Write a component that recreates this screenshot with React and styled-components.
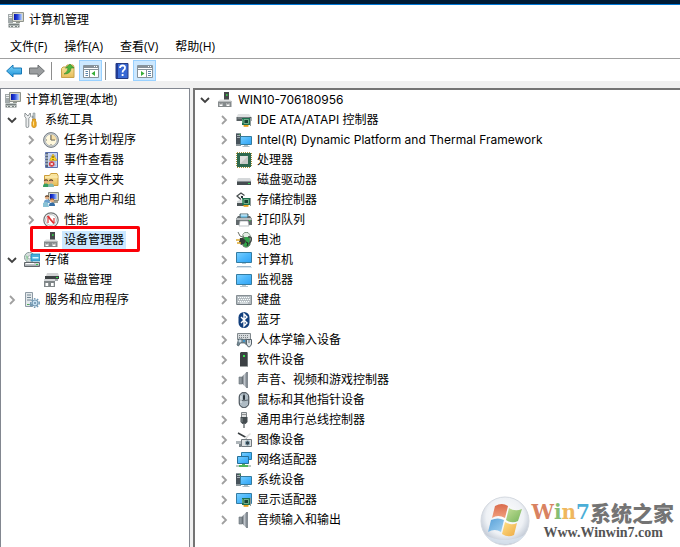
import React from "react";
import styled, { createGlobalStyle } from "styled-components";

const GlobalStyle = createGlobalStyle`
  * { box-sizing: border-box; }
  html, body, #root { height: 100%; }
  body {
    margin: 0;
    overflow: hidden;
    background: #fff;
    color: #000;
    font: 12px/20px "Open Sans", "Noto Sans CJK SC", sans-serif;
  }
  button { font: inherit; color: inherit; }
`;

const Window = styled.div`
  position: relative;
  display: flex;
  flex-direction: column;
  min-height: 100vh;
  border-top: 4px solid #001b36;
  background: #f0f0f0;
`;

const TitleBar = styled.header`
  display: flex;
  align-items: center;
  gap: 5px;
  padding: 4px 8px 3px;
  border-top: 1px solid #0078d7;
  background: #fff;
`;

const Title = styled.h1`
  margin: 0;
  font-size: 12px;
  font-weight: 400;
  line-height: 22px;
`;

const MenuBar = styled.nav`
  display: flex;
  gap: 17px;
  padding: 3px 10px 1px;
  background: #fff;
  border-bottom: 1px solid #a0a0a0;
`;

const MenuButton = styled.button`
  padding: 0;
  border: 0;
  background: none;
  white-space: nowrap;
`;

const ToolBar = styled.div`
  display: flex;
  align-items: center;
  padding: 1px 2px 0;
  background: #fff;
`;

const ToolButton = styled.button`
  display: grid;
  place-items: center;
  width: 23px;
  height: 21px;
  padding: 0;
  border: 1px solid ${(p) => (p.$on ? "#99d1ff" : "transparent")};
  background: ${(p) => (p.$on ? "#cce8ff" : "transparent")};
`;

const Separator = styled.span`
  width: 1px;
  height: 18px;
  margin: 0 4px 0 3px;
  background: #8d8d8d;
`;

const Panes = styled.main`
  flex: 1;
  display: grid;
  grid-template-columns: 190px minmax(0, 1fr);
  gap: 3px;
  padding-top: 7px;
`;

const ConsolePane = styled.section`
  padding: 1px 0 0 5px;
  border: 1px solid #828790;
  border-left-width: 0;
  border-bottom: 0;
  box-shadow: inset 1px 0 #828790;
  background: #fff;
`;

const DevicePane = styled.section`
  padding: 0 0 0 3px;
  border-top: 2px solid #747474;
  border-left: 2px solid #747474;
  background: #fff;
`;

const Tree = styled.ul`
  margin: 0;
  padding: 0 0 0 ${(p) => (p.$nested ? "19px" : "0")};
  list-style: none;
`;

const Row = styled.div`
  position: relative;
  display: flex;
  align-items: center;
  height: 20px;
`;

const Expander = styled.button`
  flex: none;
  display: flex;
  align-items: center;
  width: 19px;
  height: 20px;
  margin-left: ${(p) => (p.$outdent ? "-19px" : "0")};
  padding: 0;
  border: 0;
  background: none;
`;

const Label = styled.button`
  height: 18px;
  margin-left: 3px;
  padding: 0 2px;
  border: 0;
  background: ${(p) => (p.$selected ? "#cce8ff" : "transparent")};
  line-height: 18px;
  white-space: nowrap;
`;

const WideLabel = styled(Label)`
  font-family: Inter, "Noto Sans CJK SC", sans-serif;
`;

const Callout = styled.span`
  position: absolute;
  top: -4px;
  left: -13px;
  width: 110px;
  height: 26px;
  border: 3px solid #fb0007;
  border-radius: 2px;
  pointer-events: none;
`;

const Glyph = styled.svg`
  flex: none;
  display: block;
  width: ${(p) => p.$w || 16}px;
  height: ${(p) => p.$h || 16}px;
`;

const Defs = styled.svg`
  display: block;
  width: 0;
  height: 0;
`;

const Watermark = styled.a`
  position: absolute;
  right: 6px;
  bottom: 1px;
  display: flex;
  align-items: center;
  gap: 1px;
  color: #747474;
  text-decoration: none;
`;

const WatermarkText = styled.span`
  display: flex;
  flex-direction: column;
`;

const Brand = styled.strong`
  display: flex;
  align-items: center;
  font: 900 21px/24px "Noto Sans CJK SC", sans-serif;
`;

const BrandPart = styled.span`
  color: ${(p) => p.$color};
  font: 700 20px/24px "DejaVu Serif", serif;
`;

const Site = styled.span`
  padding-left: 12px;
  color: #555;
  font: 700 14px/18px "Liberation Serif", serif;
`;

const SharedPaints = () => (
  <Defs aria-hidden="true">
    <defs>
      <linearGradient id="screen" x1="0" y1="0" x2="1" y2="1">
        <stop offset="0" stopColor="#7bd0ff" />
        <stop offset=".5" stopColor="#4db8fc" />
        <stop offset="1" stopColor="#2fa2f5" />
      </linearGradient>
      <linearGradient id="navy" x1="0" y1="0" x2="1" y2="0">
        <stop offset="0" stopColor="#0714a8" />
        <stop offset=".45" stopColor="#2746dc" />
        <stop offset="1" stopColor="#b7d4ff" />
      </linearGradient>
      <linearGradient id="metal" x1="0" y1="0" x2="0" y2="1">
        <stop offset="0" stopColor="#e4e6e8" />
        <stop offset="1" stopColor="#969da2" />
      </linearGradient>
      <linearGradient id="folder" x1="0" y1="0" x2="0" y2="1">
        <stop offset="0" stopColor="#fae9a8" />
        <stop offset="1" stopColor="#e7bd58" />
      </linearGradient>
      <linearGradient id="arrow" x1="0" y1="0" x2="0" y2="1">
        <stop offset="0" stopColor="#7fd3f7" />
        <stop offset="1" stopColor="#1c92da" />
      </linearGradient>
      <linearGradient id="cone" x1="0" y1="0" x2="1" y2="0">
        <stop offset="0" stopColor="#555d64" />
        <stop offset=".5" stopColor="#bfc5cb" />
        <stop offset="1" stopColor="#717981" />
      </linearGradient>
      <radialGradient id="orb" cx=".5" cy=".4" r=".6">
        <stop offset="0" stopColor="#fff" />
        <stop offset=".65" stopColor="#eef1f5" />
        <stop offset="1" stopColor="#b8c1cf" />
      </radialGradient>
      <linearGradient id="flagRed" x1="0" y1="0" x2="0" y2="1">
        <stop offset="0" stopColor="#d96b4c" />
        <stop offset="1" stopColor="#f1a07e" />
      </linearGradient>
      <linearGradient id="flagGreen" x1="0" y1="0" x2="1" y2="1">
        <stop offset="0" stopColor="#c5df98" />
        <stop offset="1" stopColor="#76b45b" />
      </linearGradient>
      <linearGradient id="flagBlue" x1="0" y1="0" x2="1" y2="1">
        <stop offset="0" stopColor="#57a0d8" />
        <stop offset="1" stopColor="#a3d2f2" />
      </linearGradient>
      <linearGradient id="flagGold" x1="0" y1="0" x2="1" y2="1">
        <stop offset="0" stopColor="#ffe18a" />
        <stop offset="1" stopColor="#eda943" />
      </linearGradient>
    </defs>
  </Defs>
);

const Board = ({ x = 7, y = 7 }) => (
  <g transform={`translate(${x} ${y})`}>
    <path d="M0 0h8.5v7H0z" fill="#1e7050" />
    <path d="M8 0h1v8H8z" fill="#8e9a99" />
    <path d="M2 1.5h4.5v4H2z" fill="#174533" stroke="#86c3a0" strokeWidth=".8" />
    <path d="M0 2h1M0 4h1" stroke="#94d29f" />
    <path d="M1.5 7h5v1.7h-5z" fill="#f2ad20" />
    <path d="M3 7v2M5 7v2" stroke="#bd7300" strokeWidth=".5" />
  </g>
);

const Tower = () => (
  <g>
    <path d="M0 1h5v13H0z" fill="#48535b" />
    <path d="M0 1h5v1H0z" fill="#8b969d" />
    <path d="M1 3.5h3M1 5.5h3" stroke="#a6b0b5" />
    <path d="M3.5 2h1v1h-1z" fill="#37e442" />
    <path d="M0 12h5v2H0z" fill="#8a9499" />
  </g>
);

const Person = ({ x, y, hair, coat }) => (
  <g transform={`translate(${x} ${y})`}>
    <circle cx="3" cy="2.5" r="2" fill="#e9b183" />
    <path d="M.8 2.5C.8-.6 5.4-.6 5.2 2.6L4 1.6 1.5 1.8z" fill={hair} />
    <path d="M0 8c0-3 1-3.5 3-3.5S6 5 6 8z" fill={coat} />
  </g>
);

const drawings = {
  management: (
    <>
      <path d="M0 2h5v9H0z" fill="#a2a9aa" />
      <path d="M1 3h3v1H1zM1 5h3v1H1z" fill="#edf0ef" />
      <path d="M4.5.5h11v9h-11z" fill="#d5d6ca" stroke="#8f948d" />
      <path d="M6 2h8v6H6z" fill="url(#navy)" />
      <path d="M8 9.5h4V11H8z" fill="#92978e" />
      <path d="M.5 11.5h11v4H.5z" fill="#788080" />
      <path d="M1 11h10v1H1zM1 13h10v.8H1z" fill="#bdc5c2" />
      <path d="M2 14h1v1H2zM5 14h2v1H5zM9 14h1v1H9z" fill="#e8eee7" />
    </>
  ),
  tools: (
    <>
      <path d="M1 1 4 4 6.2 1l.6 3.3-2 2V14q0 1.6-1.5 1.6T2 14V6.2L.7 4.5z" fill="#eceeef" stroke="#767d80" strokeWidth=".8" />
      <path d="M9 1h2v7H9zM8 4h1v2H8z" fill="#c4cccd" stroke="#778286" strokeWidth=".5" />
      <path d="M8.5 7h3v2l.7 1v4q-.7 1.8-2.2 1.8T7.8 14v-4l.7-1z" fill="#edaa25" stroke="#be7b00" strokeWidth=".6" />
      <path d="M9.5 9.5v4" stroke="#ffe293" />
    </>
  ),
  clock: (
    <>
      <circle cx="8" cy="8" r="7.4" fill="#cbd1d6" stroke="#747b80" />
      <circle cx="8" cy="8" r="5.8" fill="#fff8dc" stroke="#989fa2" strokeWidth=".5" />
      <path d="M8 8V3M8 8h4" stroke="#53585b" strokeWidth="1.2" />
      <path d="M8 8V2.4A5.6 5.6 0 0 1 13.6 8z" fill="#e3b04b" opacity=".35" />
      <path d="M3 8h1M8 12v1" stroke="#777" />
    </>
  ),
  events: (
    <>
      <path d="M2.5.5h12v15h-12z" fill="#c6d3f2" stroke="#5b71b0" />
      <path d="M3 1h2v14H3z" fill="#59687a" />
      <path d="M1 3h4M1 6h4M1 9h4M1 12h4" stroke="#d5dce2" />
      <path d="M6.5 4H13M6.5 7H13M6.5 10H13M6.5 13H13" stroke="#8598c8" strokeWidth=".7" />
      <path d="m10 2 4 6.5H6.5z" fill="#ffd425" stroke="#bc9100" strokeWidth=".5" />
      <path d="M10 4v2M10 7v1" stroke="#4c4000" />
      <circle cx="8.7" cy="12" r="2.8" fill="#d3383d" />
      <path d="m7.5 10.8 2.4 2.4m0-2.4-2.4 2.4" stroke="#fff" />
    </>
  ),
  shared: (
    <>
      <path d="M1.5 3.5h5l1.3-2H14l1 2v10H1.5z" fill="url(#folder)" stroke="#cc9d39" />
      <path d="M2 5h13" stroke="#fff1bd" />
      <Person x="0" y="7" hair="#5a3b20" coat="#369d60" />
      <Person x="5" y="7" hair="#432b1c" coat="#84b9b0" />
    </>
  ),
  users: (
    <>
      <path d="M5.5.5h10v8h-10z" fill="#d5d4c6" stroke="#888b83" />
      <path d="M7 2h7v5H7z" fill="url(#navy)" />
      <path d="M9 9h6v2H9z" fill="#9d9e91" />
      <Person x="1" y="3" hair="#4a3420" coat="#6aa0ce" />
      <Person x="6" y="6" hair="#a35a1d" coat="#346da5" />
      <path d="M0 11q3-2 5 0l1 4H0z" fill="#8ac2d5" />
    </>
  ),
  performance: (
    <>
      <circle cx="8" cy="8" r="7.2" fill="#fff" stroke="#737777" strokeWidth="1.2" />
      <circle cx="8" cy="8" r="5.4" fill="none" stroke="#b9bdbe" />
      <path d="M5 11V5.5M5 5.5l2-.5M11 11V6" fill="none" stroke="#d62c2c" strokeWidth="1.1" />
      <path d="m4.5 4 6.5 7.5" stroke="#db3032" strokeWidth="1.8" />
    </>
  ),
  devices: (
    <>
      <path d="M7 0h5v9H7z" fill="#46494b" />
      <path d="M9 2.2h1.6v1.6H9z" fill="#37df46" />
      <path d="M1.5 9 3 7.5h10L14.5 9z" fill="#dfe1e2" />
      <path d="M1 9h13.5v6H1z" fill="#858a8c" />
      <path d="M1 9h13.5v1H1z" fill="#b8bbbc" />
      <path d="M2.5 11h3v3h-3zM9.5 11h3v3h-3z" fill="#fff" />
      <path d="M3.3 11v1.5M4.8 11v1.5M10.3 11v1.5M11.8 11v1.5" stroke="#353a3c" strokeWidth=".7" />
    </>
  ),
  storage: (
    <>
      <circle cx="5.5" cy="5.3" r="5" fill="#d7dedd" stroke="#899a9b" />
      <path d="M1.5 3 5 5 3 9z" fill="#9bd3a8" />
      <circle cx="5.5" cy="5.3" r="1.5" fill="#fff" stroke="#889294" strokeWidth=".6" />
      <path d="M7 2h9v7H7z" fill="#49aedd" stroke="#197eac" strokeWidth=".7" />
      <path d="M8.5 5h6v1.5h-6z" fill="#dcf8ff" />
      <path d="M.5 10.5h15v4H.5z" fill="url(#metal)" stroke="#60666a" />
      <path d="M2 11.5h8" stroke="#fff" />
      <path d="M12 12h2v1h-2z" fill="#2cc74b" />
    </>
  ),
  disks: (
    <>
      <path d="M4 1h11l1 3H3z" fill="#d2d3d4" />
      <path d="M2 4h14v3H2z" fill="#3d4143" />
      <path d="M13 5h2v1h-2z" fill="#31df4b" />
      <path d="M1 8h11v7H1z" fill="#808688" />
      <path d="M1 7h11v2H1z" fill="#d4d6d8" />
      <path d="M2.5 11h2.7v3H2.5zM8 11h2.7v3H8z" fill="#fff" />
      <path d="M12 7h3v2h-3z" fill="#a3a8aa" />
    </>
  ),
  services: (
    <>
      <path d="M1.5.5h7v14h-7z" fill="#e4e9ec" stroke="#8d9aa4" />
      <path d="M3 3h4M3 5.5h4M3 8h4" stroke="#708491" />
      <path d="M3 12h2v1H3z" fill="#56ae58" />
      <circle cx="11" cy="11" r="3" fill="#c9e2f3" stroke="#7398b2" strokeWidth="1.2" />
      <circle cx="11" cy="11" r="4.3" fill="none" stroke="#6f98b6" strokeWidth="1.3" strokeDasharray="1.6 1.5" />
      <circle cx="11" cy="11" r="1" fill="#6a8da8" />
      <path d="M5 12.5h3M6.5 11v3" stroke="#7599b0" />
    </>
  ),
  ide: (
    <>
      <path d="M2 2h11l2.5 3H.5z" fill="#dfe1e2" />
      <path d="M.5 5h15v4H.5z" fill="#555d60" />
      <path d="M1.5 6h12" stroke="#999fa1" />
      <Board x={6} y={6} />
    </>
  ),
  platform: (
    <>
      <Tower />
      <path d="M4.5 4.5h11v8h-11z" fill="url(#screen)" stroke="#347c9f" />
      <path d="M8 13h4v1H8zM6.5 14h7v1h-7z" fill="#a9bcc5" />
    </>
  ),
  cpu: (
    <>
      <path d="M1 .5h14M1 15.5h14M.5 1v14M15.5 1v14" stroke="#a69139" strokeDasharray="1 1" />
      <path d="M1 1h14v14H1z" fill="#2d684e" />
      <path d="M4 4h8v8H4z" fill="#dedfdd" />
      <path d="m4 12 8-8v8z" fill="#c6c9c6" />
    </>
  ),
  drive: (
    <>
      <path d="m2 6 12 0 1.5 3H.5z" fill="#d5d8da" />
      <path d="M1 9h14v4H1z" fill="#464d51" />
      <path d="M1 9h14v1H1z" fill="#858c90" />
      <path d="M12 11h2v1h-2z" fill="#36d856" />
    </>
  ),
  storageController: (
    <>
      <path d="M8.5 3.5 5 1 1 4l4 3.5" fill="none" stroke="#464c4d" strokeWidth="1.3" />
      <path d="m5 3 2 1.2L5 6 3.5 4z" fill="#eceeed" />
      <path d="M5 4h2v2H5z" fill="#263234" />
      <path d="m1 9 6-2 3 4H1z" fill="#d5dadb" />
      <path d="M1 11h8v3H1z" fill="#4c5557" />
      <Board x={6} y={6} />
    </>
  ),
  printer: (
    <>
      <path d="M4 2h8v4H4z" fill="#76c5e9" stroke="#50686e" />
      <path d="M5 3h6" stroke="#e7f8ff" />
      <path d="M2 4h2l1 2h6l1-2h2l2 3v6H0V7z" fill="#61696c" />
      <path d="M1 6h14l1 2H0z" fill="#b7bcbe" />
      <path d="M4 9h8l1 5H3z" fill="#fff" stroke="#a5aeb0" strokeWidth=".7" />
      <path d="M13 8h1.5v1H13z" fill="#36d34b" />
    </>
  ),
  battery: (
    <>
      <path d="M7 2q4-4 7 1v10q-3 4-7 1z" fill="#31a54a" stroke="#718174" />
      <path d="M7 2q4-3 7 1l-1 2H8z" fill="#e4ebe4" />
      <path d="M12 5h2q2 0 1 4l-2 3" fill="none" stroke="#434c47" strokeWidth="1.5" />
      <path d="m2 0 2 4M4 4l5 2" stroke="#666b62" />
      <path d="m4 6 3 0 3 3-2 3-3 1-2-3z" fill="#353b38" />
      <path d="M0 8h4M1 11h4" stroke="#dda931" strokeWidth="1.4" />
      <path d="M10 10q3 1 1 4" stroke="#252c28" fill="none" strokeWidth="1.2" />
    </>
  ),
  computer: (
    <>
      <path d="M.5.5h15v10H.5z" fill="url(#screen)" stroke="#347ca2" />
      <path d="M6 11h4v1H6z" fill="#b4cad6" />
      <path d="M1 14h14v1H1z" fill="#9fb8ca" />
      <path d="M0 15h16v1H0z" fill="#dbe5ec" />
    </>
  ),
  monitor: (
    <>
      <path d="M.5 2.5h15v10H.5z" fill="url(#screen)" stroke="#347ca2" />
      <path d="M6 13h4v1H6zM4 14h8v1H4z" fill="#b5c5cd" />
    </>
  ),
  keyboard: (
    <>
      <path d="M.5 3.5h15v9H.5z" fill="#b4bbc0" stroke="#868f94" />
      <path d="M2 5.5h12M3 7.5h11M2 9.5h12" stroke="#f9ffff" strokeWidth="1.1" strokeDasharray="1.2 .8" />
      <path d="M1 12h14v1H1z" fill="#6f787d" />
      <path d="M4 11h8" stroke="#edf3f5" />
    </>
  ),
  bluetooth: (
    <>
      <rect x="2.5" y="0" width="11" height="16" rx="5.5" fill="#123f7d" />
      <path d="m5 5 6 6-3 3V2l3 3-6 6" fill="none" stroke="#fff" strokeWidth="1.4" />
    </>
  ),
  hid: (
    <>
      <path d="M1.5 1.5h13v6h-13z" fill="#d7dbde" stroke="#81898d" />
      <path d="M3 3.5h10M3 5.5h10" stroke="#7b8386" strokeDasharray="1 1" />
      <path d="M1 13 2.5 7h4l1.5 2 1.5-2h1v6l-2-2h-4l-2 3z" fill="#738893" stroke="#455760" strokeWidth=".7" />
      <path d="M2.5 9h3M4 7.5v3" stroke="#eaf6ff" />
      <circle cx="8" cy="9" r="1" fill="#329bdb" />
      <path d="M10.5 7.5h5V12q-1 3-2.5 3t-2.5-3z" fill="#dfe4e7" stroke="#56626a" />
      <path d="M13 8v3" stroke="#68747b" />
    </>
  ),
  software: (
    <>
      <path d="M4 1 5 0h6l1 1v13H4z" fill="#3c4144" />
      <path d="M11 1h1v13h-1z" fill="#737b7d" />
      <path d="M7 3h2v2H7z" fill="#39e54d" />
      <path d="M4 14h8v1H4z" fill="#9da2a2" />
    </>
  ),
  speaker: (
    <>
      <path d="M3 5h3v7H3z" fill="#8f979d" stroke="#666e75" strokeWidth=".6" />
      <path d="m6 4.5 4-4h1v15h-1l-4-4z" fill="url(#cone)" />
      <path d="M10 0h2v16h-2z" fill="#858c93" />
    </>
  ),
  mouse: (
    <>
      <rect x="3.2" y=".5" width="9.6" height="15" rx="4.5" fill="#aebbc4" stroke="#353e46" />
      <path d="M8 1v7M4 8q4 1.5 8 0" fill="none" stroke="#5e6970" />
      <rect x="7" y="3" width="2" height="5" rx="1" fill="#2c363e" />
      <path d="M5 4v7" stroke="#eef3f5" />
    </>
  ),
  usb: (
    <>
      <path d="M5.5.5h5v5h-5z" fill="#dee0e1" stroke="#7d8488" />
      <path d="M7 2v1M9 2v1" stroke="#444" />
      <path d="M4.5 5h7v5L9.5 12h-3l-2-2z" fill="#444c50" />
      <path d="M8 11v5" stroke="#656c70" strokeWidth="1.4" />
      <path d="M6 6v4" stroke="#838c90" />
    </>
  ),
  imaging: (
    <>
      <path d="m2 1 9 5" stroke="#383e41" strokeWidth="1.5" />
      <path d="m8 6 6-5 1 1-5 5z" fill="#dedfdf" />
      <path d="M0 9h6v3H0z" fill="#adb4b8" />
      <path d="M5.5 7.5h10v7h-10z" fill="#dee1e2" stroke="#727a7f" />
      <circle cx="11.5" cy="11" r="2.2" fill="#33434d" stroke="#8dabb9" />
      <path d="M3 12h2v3H3z" fill="#788287" />
    </>
  ),
  network: (
    <>
      <path d="M5.5.5h10v7h-10z" fill="url(#screen)" stroke="#287ca5" />
      <path d="M1.5 4.5h11v7h-11z" fill="url(#screen)" stroke="#266f97" />
      <path d="M6 12h3v1h3v2H3v-2h3z" fill="#4fb45b" />
      <path d="M0 13h3v2H0zM12 13h3v2h-3z" fill="#bac8c3" />
    </>
  ),
  display: (
    <>
      <path d="M.5 1.5h15v10H.5z" fill="url(#screen)" stroke="#347ca2" />
      <Board x={6} y={6} />
    </>
  ),
  back: (
    <path d="M.6 8 7 2v3h8.5v6H7v3z" fill="url(#arrow)" stroke="#1679b7" />
  ),
  forward: (
    <path d="M15.4 8 9 2v3H.5v6H9v3z" fill="#9a9d9f" stroke="#6d7173" />
  ),
  up: (
    <>
      <path d="M1.5 5.5 3 4h3l1-2h6l1 2v10.5H1.5z" fill="url(#folder)" stroke="#c8a24a" />
      <path d="M4 11q4-2 4-6H5.5L10 1l4 4h-3q0 6-7 6z" fill="#4eb53b" stroke="#34852a" strokeWidth=".6" />
    </>
  ),
  panelLeft: (
    <>
      <path d="M.5 2.5h15v12H.5z" fill="#fff" stroke="#87939b" />
      <path d="M1 3h14v2H1z" fill="#869098" />
      <path d="M11 3h1v1h-1zM13 3h1v1h-1z" fill="#fff" />
      <path d="M1 6.5h14M6.5 7v7" stroke="#87939b" />
      <path d="M2.5 8.5H5M2.5 10.5H5M2.5 12.5H5" stroke="#5984a9" />
      <path d="m12 8v5L8.5 10.5z" fill="#36ae38" />
    </>
  ),
  panelRight: (
    <>
      <path d="M.5 2.5h15v12H.5z" fill="#fff" stroke="#87939b" />
      <path d="M1 3h14v2H1z" fill="#869098" />
      <path d="M11 3h1v1h-1zM13 3h1v1h-1z" fill="#fff" />
      <path d="M1 6.5h14M9.5 7v7" stroke="#87939b" />
      <path d="M11 8.5h3M11 10.5h3M11 12.5h3" stroke="#5984a9" />
      <path d="M4 8v5l3.5-2.5z" fill="#36ae38" />
    </>
  ),
  help: (
    <>
      <path d="M2 .5h12v15H2z" fill="#3868d4" stroke="#263b82" />
      <path d="M2 1h2v14H2z" fill="#203b94" />
      <path d="M6 5q0-2.5 2.6-2.5T11 5q0 1.4-1.5 2.3-.9.6-.9 2.2M8.6 11v2" fill="none" stroke="#fff" strokeWidth="1.8" />
    </>
  ),
};

const Icon = ({ name }) => (
  <Glyph viewBox="0 0 16 16" aria-hidden="true">{drawings[name]}</Glyph>
);

const Chevron = ({ open }) => (
  <Glyph $w={14} $h={14} viewBox="0 0 14 14" fill="none" aria-hidden="true">
    {open ? (
      <path d="m3 5 4 4 4-4" stroke="#404040" strokeWidth="1.8" />
    ) : (
      <path d="m5 3 4 4-4 4" stroke="#a0a0a0" strokeWidth="1.8" />
    )}
  </Glyph>
);

const consoleTree = {
  icon: "management", text: "计算机管理(本地)",
  children: [
    {
      icon: "tools", text: "系统工具", open: true,
      children: [
        { icon: "clock", text: "任务计划程序", open: false },
        { icon: "events", text: "事件查看器", open: false },
        { icon: "shared", text: "共享文件夹", open: false },
        { icon: "users", text: "本地用户和组", open: false },
        { icon: "performance", text: "性能", open: false },
        { icon: "devices", text: "设备管理器", selected: true },
      ],
    },
    { icon: "storage", text: "存储", open: true, children: [{ icon: "disks", text: "磁盘管理" }] },
    { icon: "services", text: "服务和应用程序", open: false },
  ],
};

const deviceTree = {
  icon: "devices", text: "WIN10-706180956", open: true,
  children: [
    ["ide", "IDE ATA/ATAPI 控制器"],
    ["platform", "Intel(R) Dynamic Platform and Thermal Framework"],
    ["cpu", "处理器"],
    ["drive", "磁盘驱动器"],
    ["storageController", "存储控制器"],
    ["printer", "打印队列"],
    ["battery", "电池"],
    ["computer", "计算机"],
    ["monitor", "监视器"],
    ["keyboard", "键盘"],
    ["bluetooth", "蓝牙"],
    ["hid", "人体学输入设备"],
    ["software", "软件设备"],
    ["speaker", "声音、视频和游戏控制器"],
    ["mouse", "鼠标和其他指针设备"],
    ["usb", "通用串行总线控制器"],
    ["imaging", "图像设备"],
    ["network", "网络适配器"],
    ["platform", "系统设备"],
    ["display", "显示适配器"],
    ["speaker", "音频输入和输出"],
  ].map(([icon, text]) => ({ icon, text, open: false })),
};

const TreeItem = ({ node, wide }) => {
  const Text = wide ? WideLabel : Label;
  return (
    <li>
      <Row>
        {node.open !== undefined && (
          <Expander $outdent={!wide} aria-label={node.text} aria-expanded={node.open}>
            <Chevron open={node.open} />
          </Expander>
        )}
        <Icon name={node.icon} />
        <Text $selected={node.selected}>{node.text}</Text>
        {node.selected && <Callout />}
      </Row>
      {node.children && (
        <Tree $nested>
          {node.children.map((child) => (
            <TreeItem key={child.text} node={child} wide={wide} />
          ))}
        </Tree>
      )}
    </li>
  );
};

export default function App() {
  return (
    <Window>
      <GlobalStyle />
      <TitleBar>
        <Icon name="management" />
        <Title>计算机管理</Title>
      </TitleBar>
      <MenuBar>
        {["文件(F)", "操作(A)", "查看(V)", "帮助(H)"].map((item) => (
          <MenuButton key={item}>{item}</MenuButton>
        ))}
      </MenuBar>
      <ToolBar role="toolbar">
        <ToolButton aria-label="后退"><Icon name="back" /></ToolButton>
        <ToolButton aria-label="前进"><Icon name="forward" /></ToolButton>
        <Separator />
        <ToolButton aria-label="上一级"><Icon name="up" /></ToolButton>
        <ToolButton $on aria-label="控制台树"><Icon name="panelLeft" /></ToolButton>
        <Separator />
        <ToolButton aria-label="帮助"><Icon name="help" /></ToolButton>
        <ToolButton $on aria-label="操作窗格"><Icon name="panelRight" /></ToolButton>
      </ToolBar>
      <Panes>
        <ConsolePane>
          <Tree><TreeItem node={consoleTree} /></Tree>
        </ConsolePane>
        <DevicePane>
          <Tree><TreeItem node={deviceTree} wide /></Tree>
        </DevicePane>
      </Panes>
      <Watermark href="#home">
        <Glyph $w={50} $h={50} viewBox="0 0 50 50" aria-hidden="true">
          <circle cx="25" cy="25" r="24" fill="url(#orb)" stroke="#d4d9e0" />
          <path d="M15 10q7-4 13 0l-3 12q-7-4-13 0z" fill="url(#flagRed)" />
          <path d="M29 12q6 4 13 1l-4 12q-6 3-12-1z" fill="url(#flagGreen)" />
          <path d="M11 24q7-3 13 0l-3 12q-6-4-13 0z" fill="url(#flagBlue)" />
          <path d="M25 26q6 4 12 1l-3 12q-6 3-12-1z" fill="url(#flagGold)" />
          <path d="M5 39q20 10 40 0-7 9-20 9T5 39" fill="#dce7f2" opacity=".7" />
        </Glyph>
        <WatermarkText>
          <Brand>
            <BrandPart $color="#d98261">W</BrandPart>
            <BrandPart $color="#86bd74">i</BrandPart>
            <BrandPart $color="#efb75d">n</BrandPart>
            <BrandPart $color="#4baed7">7</BrandPart>
            系统之家
          </Brand>
          <Site>Www.Winwin7.com</Site>
        </WatermarkText>
      </Watermark>
      <SharedPaints />
    </Window>
  );
}
